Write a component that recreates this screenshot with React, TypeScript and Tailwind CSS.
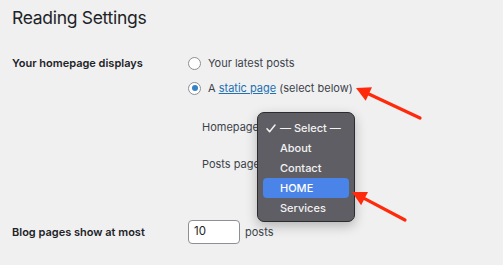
import React from "react";

function Radio({ checked }: { checked?: boolean }) {
  return (
    <span className="w-[13px] h-[13px] rounded-full border border-[#8c8f94] bg-white flex items-center justify-center shrink-0">
      {checked && <span className="w-[6px] h-[6px] rounded-full bg-[#3582c4]" />}
    </span>
  );
}

function Arrow({ x1, y1, x2, y2 }: { x1: number; y1: number; x2: number; y2: number }) {
  // tail (x1,y1) -> tip (x2,y2)
  const ang = Math.atan2(y2 - y1, x2 - x1);
  const len = 16;
  const spread = 0.48;
  const ax = x2 - len * Math.cos(ang - spread);
  const ay = y2 - len * Math.sin(ang - spread);
  const bx = x2 - len * Math.cos(ang + spread);
  const by = y2 - len * Math.sin(ang + spread);
  const mx = x2 - 10 * Math.cos(ang);
  const my = y2 - 10 * Math.sin(ang);
  return (
    <>
      <line x1={x1} y1={y1} x2={mx} y2={my} stroke="#ff2a0c" strokeWidth={3.2} strokeLinecap="round" />
      <polygon points={`${x2},${y2} ${ax},${ay} ${bx},${by}`} fill="#ff2a0c" />
    </>
  );
}

export default function App() {
  const items = ["About", "Contact", "HOME", "Services"];
  return (
    <div
      className="relative w-[503px] h-[265px] overflow-hidden bg-[#f0f0f1] text-[#1d2327]"
      style={{ fontFamily: "Inter, 'Noto Sans', sans-serif" }}
    >
      <div className="pl-[12px] pt-[6px]">
        <h1 className="text-[17.5px] leading-[24px] font-normal tracking-[-0.3px] text-[#1d2327]">Reading Settings</h1>

        <div className="flex mt-[24px]">
          <div className="w-[176px] text-[11px] font-semibold leading-[18px]">Your homepage displays</div>
          <div className="flex flex-col text-[11px] leading-[18px] text-[#3c434a]">
            <label className="flex items-center gap-[7px]">
              <Radio />
              <span>Your latest posts</span>
            </label>
            <label className="flex items-center gap-[7px] mt-[7px]">
              <Radio checked />
              <span>
                A <span className="text-[#2271b1] underline">static page</span> (select below)
              </span>
            </label>
            <div className="ml-[14px] mt-[21px]">Homepage</div>
            <div className="ml-[14px] mt-[19px]">Posts page</div>
          </div>
        </div>

        <div className="flex items-center mt-[47px]">
          <div className="w-[176px] text-[11px] font-semibold leading-[18px]">Blog pages show at most</div>
          <div className="w-[52px] h-[24px] bg-white border border-[#8c8f94] rounded-[4px] text-[11.5px] pl-[5px] flex items-center">
            10
          </div>
          <span className="ml-[5px] text-[11px] text-[#3c434a]">posts</span>
        </div>
      </div>

      {/* native select popup */}
      <div className="absolute left-[257px] top-[112px] w-[98px] h-[110px] rounded-[7px] bg-[#5f5e65] border border-[#2c2c2f] shadow-[0_4px_12px_rgba(0,0,0,0.25)] px-[5px] pt-[5px] text-[11px] font-medium text-[#f2f2f2]">
        <div className="h-[20px] flex items-center">
          <span className="w-[17px] pl-[3px] flex items-center">
            <svg width="10" height="9" viewBox="0 0 10 9">
              <path d="M1 4.8 L3.6 7.8 L9 1" fill="none" stroke="#f2f2f2" strokeWidth="1.5" strokeLinecap="round" strokeLinejoin="round" />
            </svg>
          </span>
          <span>— Select —</span>
        </div>
        {items.map((it) => (
          <div
            key={it}
            className={`h-[20px] flex items-center pl-[17px] rounded-[4px] ${it === "HOME" ? "bg-[#4a84e8] text-white" : ""}`}
          >
            {it}
          </div>
        ))}
      </div>

      <svg className="absolute left-0 top-0 pointer-events-none" width="503" height="265">
        <Arrow x1={420} y1={118} x2={356} y2={88} />
        <Arrow x1={405} y1={220} x2={352} y2={192} />
      </svg>
    </div>
  );
}
